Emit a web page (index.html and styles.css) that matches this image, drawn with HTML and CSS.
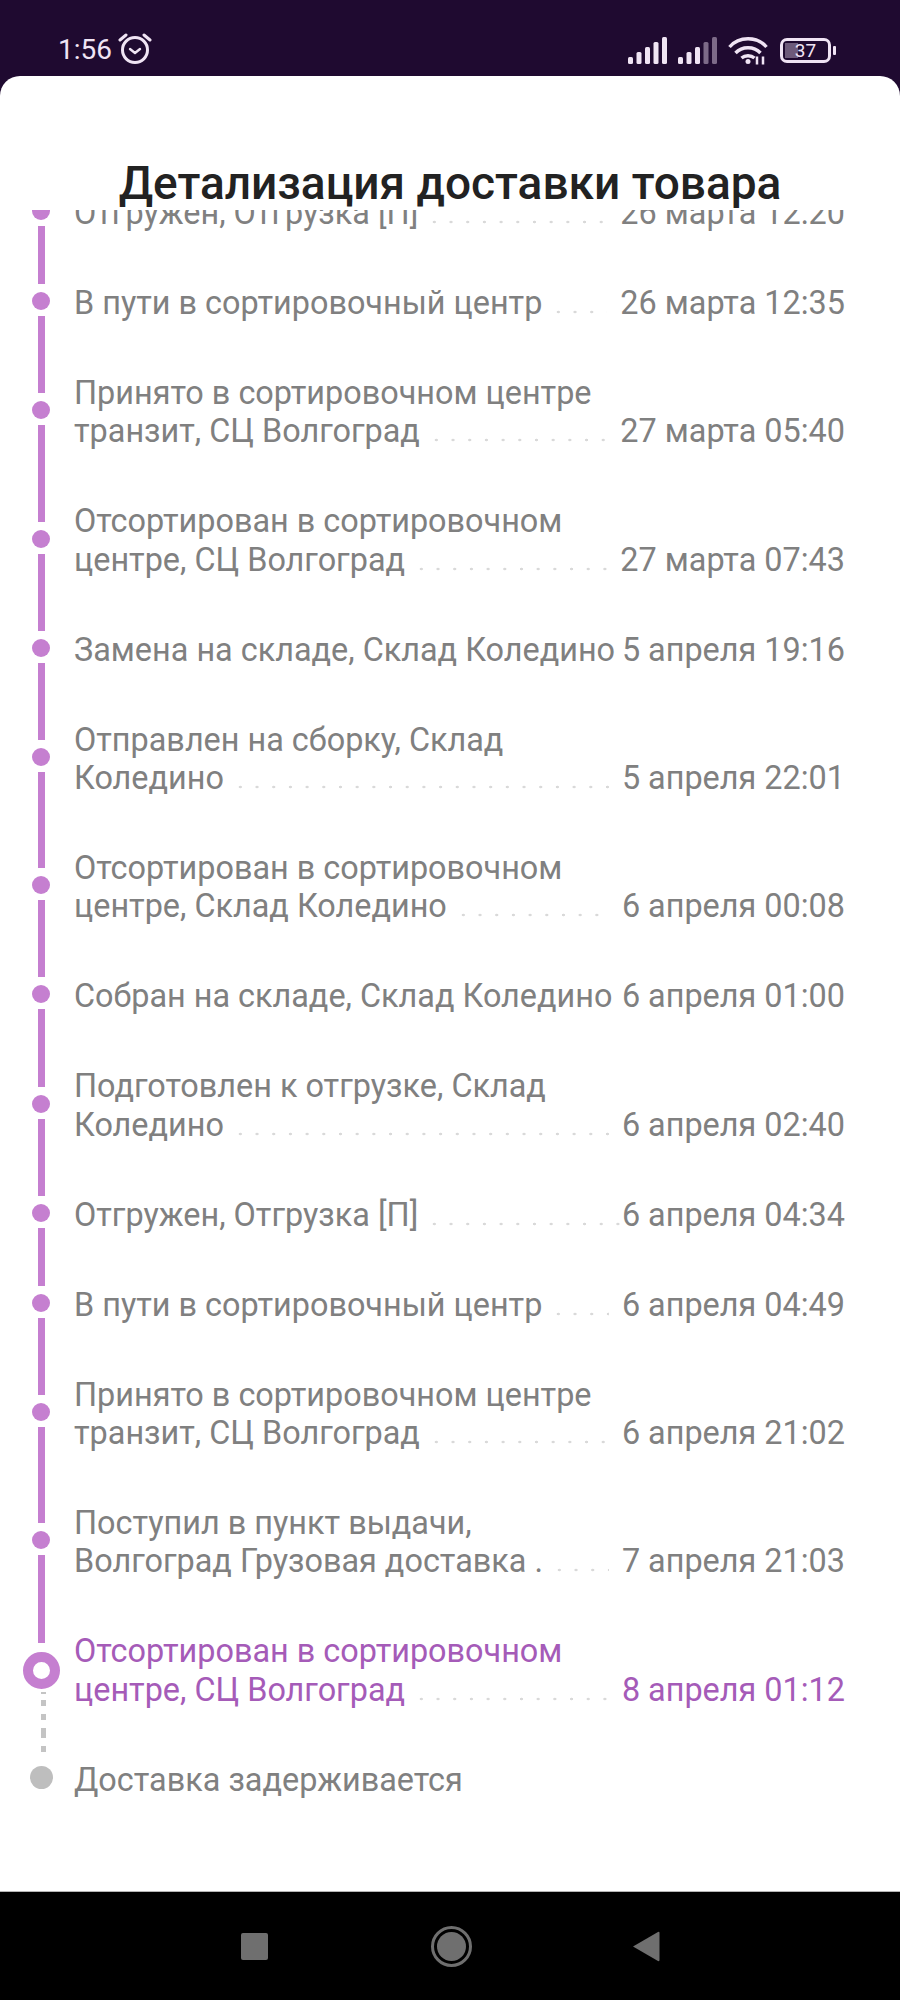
FILE: index.html
```html
<!doctype html>
<html>
<head>
<meta charset="utf-8">
<title>Детализация доставки</title>
<link rel="stylesheet" href="styles.css">
</head>
<body>
<div class="status">
	<span class="time">1:56</span>
	<svg class="alarm" width="34" height="32" viewBox="0 0 34 32" fill="none" stroke="#f0e4f4">
		<circle cx="17" cy="18" r="12.5" stroke-width="3"/>
		<path d="M12 17l5 4 5-4" stroke-width="2.4" stroke-linecap="round" stroke-linejoin="round"/>
		<path d="M2 8l6-5M32 8l-6-5" stroke-width="3" stroke-linecap="round"/>
	</svg>
	<div class="status-right">
		<svg width="40" height="27" viewBox="0 0 40 27" fill="#f0e4f4">
			<rect x="0" y="20" width="5" height="7" rx="1.5"/>
			<rect x="8.5" y="15" width="5" height="12" rx="1.5"/>
			<rect x="17" y="10" width="5" height="17" rx="1.5"/>
			<rect x="25.500" y="5" width="5" height="22" rx="1.5"/>
			<rect x="34" y="0" width="5" height="27" rx="1.5"/>
		</svg>
		<svg width="40" height="27" viewBox="0 0 40 27" fill="#f0e4f4">
			<rect x="0" y="20" width="5" height="7" rx="1.5"/>
			<rect x="8.5" y="15" width="5" height="12" rx="1.5"/>
			<rect x="17" y="10" width="5" height="17" rx="1.5"/>
			<rect x="25.500" y="5" width="5" height="22" rx="1.5" fill="#7d6a88"/>
			<rect x="34" y="0" width="5" height="27" rx="1.5" fill="#7d6a88"/>
		</svg>
		<svg class="wifi" width="40" height="29" viewBox="0 0 40 29" fill="none" stroke="#f0e4f4" stroke-width="3.4">
			<path d="M1.500 11C11 0 29 0 38.500 11"/>
			<path d="M7.500 17C14 10 26 10 32.500 17"/>
			<path d="M13.500 22C17 19 23 19 26.500 22"/>
			<circle cx="20" cy="25.500" r="2.500" fill="#f0e4f4" stroke="none"/>
			<path d="M29 20.500v8M35 20.500v8" stroke-width="2.500"/>
		</svg>
		<div class="battery"><span>37</span></div>
		<div class="battery-nub"></div>
	</div>
</div>

<div class="sheet">
	<h1 class="title">Детализация доставки товара</h1>
	<div class="list">
		<div class="row first">
			<div class="mark"><i class="bar"></i><i class="dot"></i><i class="bar"></i></div>
			<div class="body">
				<div class="line"><span>Отгружен, Отгрузка [П]</span><b class="lead"></b><span class="date">26 марта 12:20</span></div>
			</div>
		</div>
		<div class="row">
			<div class="mark"><i class="bar"></i><i class="dot"></i><i class="bar"></i></div>
			<div class="body">
				<div class="line"><span>В пути в сортировочный центр</span><b class="lead"></b><span class="date">26 марта 12:35</span></div>
			</div>
		</div>
		<div class="row">
			<div class="mark"><i class="bar"></i><i class="dot"></i><i class="bar"></i></div>
			<div class="body">
				<div class="line">Принято в сортировочном центре</div>
				<div class="line"><span>транзит, СЦ Волгоград</span><b class="lead"></b><span class="date">27 марта 05:40</span></div>
			</div>
		</div>
		<div class="row">
			<div class="mark"><i class="bar"></i><i class="dot"></i><i class="bar"></i></div>
			<div class="body">
				<div class="line">Отсортирован в сортировочном</div>
				<div class="line"><span>центре, СЦ Волгоград</span><b class="lead"></b><span class="date">27 марта 07:43</span></div>
			</div>
		</div>
		<div class="row">
			<div class="mark"><i class="bar"></i><i class="dot"></i><i class="bar"></i></div>
			<div class="body">
				<div class="line"><span>Замена на складе, Склад Коледино</span><span class="date tight">5 апреля 19:16</span></div>
			</div>
		</div>
		<div class="row">
			<div class="mark"><i class="bar"></i><i class="dot"></i><i class="bar"></i></div>
			<div class="body">
				<div class="line">Отправлен на сборку, Склад</div>
				<div class="line"><span>Коледино</span><b class="lead"></b><span class="date">5 апреля 22:01</span></div>
			</div>
		</div>
		<div class="row">
			<div class="mark"><i class="bar"></i><i class="dot"></i><i class="bar"></i></div>
			<div class="body">
				<div class="line">Отсортирован в сортировочном</div>
				<div class="line"><span>центре, Склад Коледино</span><b class="lead"></b><span class="date">6 апреля 00:08</span></div>
			</div>
		</div>
		<div class="row">
			<div class="mark"><i class="bar"></i><i class="dot"></i><i class="bar"></i></div>
			<div class="body">
				<div class="line"><span>Собран на складе, Склад Коледино</span><span class="date tight">6 апреля 01:00</span></div>
			</div>
		</div>
		<div class="row">
			<div class="mark"><i class="bar"></i><i class="dot"></i><i class="bar"></i></div>
			<div class="body">
				<div class="line">Подготовлен к отгрузке, Склад</div>
				<div class="line"><span>Коледино</span><b class="lead"></b><span class="date">6 апреля 02:40</span></div>
			</div>
		</div>
		<div class="row">
			<div class="mark"><i class="bar"></i><i class="dot"></i><i class="bar"></i></div>
			<div class="body">
				<div class="line"><span>Отгружен, Отгрузка [П]</span><b class="lead"></b><span class="date near">6 апреля 04:34</span></div>
			</div>
		</div>
		<div class="row">
			<div class="mark"><i class="bar"></i><i class="dot"></i><i class="bar"></i></div>
			<div class="body">
				<div class="line"><span>В пути в сортировочный центр</span><b class="lead"></b><span class="date">6 апреля 04:49</span></div>
			</div>
		</div>
		<div class="row">
			<div class="mark"><i class="bar"></i><i class="dot"></i><i class="bar"></i></div>
			<div class="body">
				<div class="line">Принято в сортировочном центре</div>
				<div class="line"><span>транзит, СЦ Волгоград</span><b class="lead"></b><span class="date">6 апреля 21:02</span></div>
			</div>
		</div>
		<div class="row">
			<div class="mark"><i class="bar"></i><i class="dot"></i><i class="bar"></i></div>
			<div class="body">
				<div class="line">Поступил в пункт выдачи,</div>
				<div class="line"><span>Волгоград Грузовая доставка .</span><b class="lead"></b><span class="date">7 апреля 21:03</span></div>
			</div>
		</div>
		<div class="row cur">
			<div class="mark"><i class="bar"></i><i class="dot"></i><i class="bar dash"></i></div>
			<div class="body">
				<div class="line">Отсортирован в сортировочном</div>
				<div class="line"><span>центре, СЦ Волгоград</span><b class="lead"></b><span class="date">8 апреля 01:12</span></div>
			</div>
		</div>
		<div class="row last">
			<div class="mark"><i class="bar dash"></i><i class="dot"></i><i class="bar none"></i></div>
			<div class="body">
				<div class="line">Доставка задерживается</div>
			</div>
		</div>
	</div>
</div>

<div class="nav">
	<div class="nav-square"></div>
	<div class="nav-home"><i></i></div>
	<svg class="nav-back" width="28" height="31" viewBox="0 0 28 31" fill="#6f6f6f"><path d="M1 15.500L26 1q1.500-.6 1.500 1v27q0 1.600-1.500 1z"/></svg>
</div>
</body>
</html>
```

FILE: styles.css
```css
*{margin:0;padding:0;box-sizing:border-box;}
body{width:900px;height:2000px;display:flex;flex-direction:column;background:#1f0a30;font-family:Roboto,"Noto Sans",sans-serif;overflow:hidden;}

.status{height:76px;background:#1f0a30;display:flex;align-items:center;padding:24px 64px 0 58px;color:#f0e4f4;flex:none;}
.time{font-size:28px;line-height:32px;}
.alarm{margin-left:6px;margin-top:-4px;}
.status-right{margin-left:auto;display:flex;align-items:center;}
.status-right svg{margin-right:10px;}
.status-right .wifi{margin-right:12px;}
.battery{width:51px;height:25px;border:3px solid #f0e4f4;border-radius:7px;background:linear-gradient(#6d5a7a,#6d5a7a) 2px 2px/13px 15px no-repeat;font-size:19px;line-height:19px;text-align:center;}
.battery-nub{width:3px;height:9px;margin-left:2px;background:#f0e4f4;border-radius:1px;}

.sheet{flex:1;background:#fff;border-radius:20px 20px 0 0;padding-top:83px;display:flex;flex-direction:column;min-height:0;}
.title{font-size:46px;line-height:48px;font-weight:500;color:#222;text-align:center;height:51px;}

.list{flex:1;overflow:hidden;min-height:0;}
.row{display:flex;padding-left:32px;}
.row.first{margin-top:-42px;}
.mark{width:18px;display:flex;flex-direction:column;align-items:center;flex:none;margin:-3px 0 3px;}
.bar{flex:1;width:7px;background:#c57fd0;display:block;}
.dot{width:18px;height:18px;border-radius:50%;background:#c57fd0;margin:8px 0 6px;display:block;flex:none;}
.body{flex:1;min-width:0;padding:25.95px 55px 25.95px 24px;font-size:32.4px;line-height:38.2px;color:#808080;}
.line{display:flex;white-space:nowrap;}
.lead{flex:1;min-width:0;margin-left:8px;background:radial-gradient(circle,#d9d9d9 1.2px,transparent 1.6px) 0 18px/16.7px 20px repeat-x;}
.date{flex:none;margin-left:13px;}
.date.near{margin-left:2px;}
.date.tight{margin-left:auto;}

.cur .body{color:#a55bb8;}
.cur .dot{width:37px;height:37px;margin:9px 0 3px;background:#fff;border:10px solid #c57fd0;}
.bar.dash{width:5px;margin-left:4px;background:repeating-linear-gradient(#c4c4c4 0 6px,transparent 6px 14px);}
.cur .bar.dash{background-position:0 8px;}
.last .dot{width:23px;height:23px;margin:7px 0 5px;background:#bebebe;}
.bar.none{background:none;}

.nav{height:109px;flex:none;background:#000;border-top:1px solid #b5b5b5;display:flex;align-items:center;justify-content:center;gap:163px;}
.nav-square{width:27px;height:27px;background:#6f6f6f;border-radius:2px;}
.nav-home{width:41px;height:41px;border:3px solid #6f6f6f;border-radius:50%;padding:3px;}
.nav-home i{display:block;width:100%;height:100%;border-radius:50%;background:#6f6f6f;}
.nav-back{margin-left:-3px;}
```
